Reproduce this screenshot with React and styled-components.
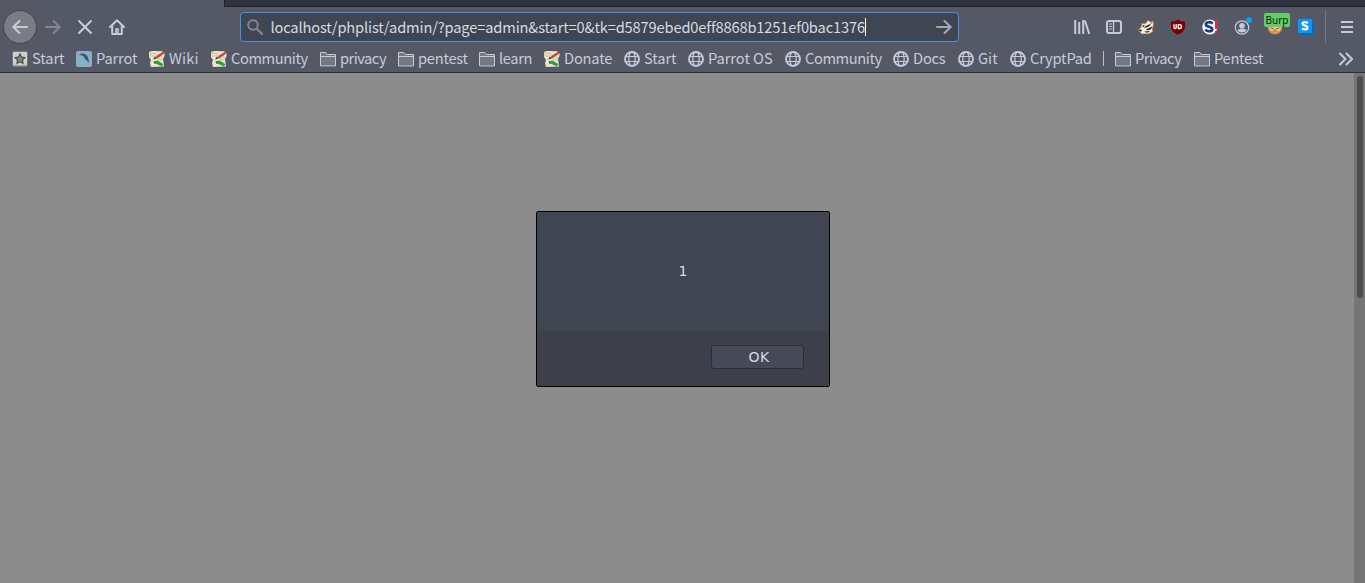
import React from "react";
import styled, { createGlobalStyle } from "styled-components";

const Global = createGlobalStyle`
  * { box-sizing: border-box; }
  html, body { margin: 0; height: 100%; overflow: hidden; }
  body { font-family: "Noto Sans CJK SC", "Noto Sans", sans-serif; background: #8c8c8c; }
  svg { display: block; flex: none; }
`;

const Window = styled.div`
  width: 1365px;
  height: 583px;
  display: flex;
  flex-direction: column;
  color: #c5cbdb;
`;
const TabStrip = styled.div`
  height: 7px;
  padding-left: 224px;
  background: #555965;
  flex: none;
`;
const InactiveTabs = styled.div`
  height: 7px;
  background: #2f333f;
  border-left: 1px solid #20232c;
  border-bottom: 1px solid #20232c;
`;
const NavBar = styled.div`
  height: 40px;
  flex: none;
  display: flex;
  align-items: center;
  background: #555965;
  padding-left: 3px;
`;
const BackButton = styled.div`
  width: 34px;
  height: 34px;
  border-radius: 50%;
  background: #7b7d84;
  border: 1px solid #41444f;
  display: grid;
  place-items: center;
  flex: none;
`;
const NavIcon = styled.div`
  width: 32px;
  height: 32px;
  display: grid;
  place-items: center;
  flex: none;
  opacity: ${(p) => (p.$dim ? 0.4 : 1)};
`;
const UrlBox = styled.div`
  width: 719px;
  height: 30px;
  margin-left: 107px;
  border: 1px solid #4c8fe2;
  border-radius: 4px;
  background: #404552;
  display: flex;
  align-items: center;
  padding: 0 6px;
  flex: none;
`;
const UrlText = styled.span`
  margin-left: 7.4px;
  font-size: 14.67px;
  line-height: 20px;
  letter-spacing: -0.15px;
  color: #d3dae3;
  white-space: nowrap;
`;
const Caret = styled.span`
  width: 1px;
  height: 18px;
  background: #fff;
`;
const GoIcon = styled.div`
  margin-left: auto;
`;
const Tools = styled.div`
  margin-left: 107px;
  display: flex;
  align-items: center;
  flex: none;
`;
const Tool = styled.div`
  width: 32px;
  height: 32px;
  display: grid;
  place-items: center;
  position: relative;
`;
const Badge = styled.span`
  position: absolute;
  left: 6px;
  top: 2px;
  width: 26px;
  height: 14px;
  border-radius: 2px;
  background: #62cc66;
  color: #10230f;
  font-family: "Noto Sans", sans-serif;
  font-size: 10px;
  line-height: 14px;
  text-align: center;
`;
const ToolDivider = styled.div`
  width: 1px;
  height: 34px;
  margin: 0 5px 0 3px;
  background: #757984;
`;
const Bookmarks = styled.div`
  height: 26px;
  flex: none;
  display: flex;
  align-items: center;
  padding: 0 11px 2px 12px;
  background: #555965;
  border-bottom: 1px solid #2b2e39;
`;
const Bookmark = styled.div`
  width: ${(p) => p.$w}px;
  flex: none;
  display: flex;
  align-items: center;
  gap: 4px;
  font-size: 14.67px;
  letter-spacing: ${(p) => p.$track}px;
  white-space: nowrap;
`;
const Label = styled.span`
  line-height: 20px;
  padding-bottom: 2px;
`;
const Separator = styled.div`
  width: 1px;
  height: 15px;
  margin-right: 11px;
  background: #b9bfcd;
`;
const Overflow = styled.div`
  margin-left: auto;
`;
const Page = styled.div`
  flex: 1;
  display: flex;
  background: #8c8c8c;
`;
const Content = styled.div`
  flex: 1;
  display: flex;
  justify-content: center;
  align-items: flex-start;
  padding: 138px 0 0 11px;
`;
const Scrollbar = styled.div`
  width: 11px;
  background: #757575;
  padding: 3px 2px 0 3px;
`;
const Thumb = styled.div`
  height: 222px;
  border-radius: 3px;
  background: #4c4d4f;
`;
const Dialog = styled.div`
  width: 294px;
  height: 176px;
  border: 1px solid #000;
  border-radius: 2px;
  overflow: hidden;
  font-family: "DejaVu Sans", sans-serif;
  font-size: 14px;
  color: #d3dae3;
`;
const Message = styled.div`
  height: 119px;
  background: #404552;
  display: grid;
  place-items: center;
  padding: 0 0 2px 1px;
`;
const Actions = styled.div`
  height: 55px;
  background: #3d404b;
  border-top: 1px solid #3c404c;
  display: flex;
  justify-content: flex-end;
  padding: 13px 25px 0 0;
`;
const OkButton = styled.button`
  width: 93px;
  height: 24px;
  padding: 0 0 0 4px;
  border: 1px solid #2b2e39;
  border-radius: 3px;
  background: #444a58;
  color: inherit;
  font: inherit;
  letter-spacing: 0.3px;
`;

const Svg = ({ size = 16, children, ...rest }) => (
  <svg width={size} height={size} viewBox="0 0 16 16" fill="none" stroke="#c5cbdb" strokeWidth="2" strokeLinecap="round" strokeLinejoin="round" {...rest}>
    {children}
  </svg>
);

const Arrow = ({ flip, color = "#c5cbdb" }) => (
  <Svg stroke={color}>
    <path d={flip ? "M15 8H1.5M7.5 2L1.3 8l6.2 6" : "M1 8h13.5M8.5 2l6.2 6-6.2 6"} />
  </Svg>
);
const Folder = () => (
  <Svg strokeWidth="1">
    <path d="M.5 14.5v-13h5.2l1.6 2h8.2v11z" fill="#747883" />
    <path d="M.5 5.5h15" />
  </Svg>
);
const Globe = () => (
  <Svg strokeWidth="1.2">
    <circle cx="8" cy="8" r="7" strokeWidth="1.9" />
    <ellipse cx="8" cy="8" rx="3.2" ry="7" />
    <path d="M1.5 5.5h13M1.5 10.5h13" />
  </Svg>
);
const StarMark = () => (
  <Svg stroke="none">
    <rect width="16" height="16" rx="2" fill="#777" />
    <rect x="1" y="1" width="14" height="13.5" rx="1" fill="#cfcfcc" />
    <path d="M8 1.6l1.9 4 4.3.6-3.1 3 .7 4.3L8 11.5l-3.8 2 .7-4.3-3.1-3 4.3-.6z" fill="#505050" />
    <path d="M8 4.5l1 2.3 2.5.3-1.8 1.8.4 2.4L8 10.1l-2.1 1.2.4-2.4-1.8-1.8L7 6.8z" fill="#858585" />
  </Svg>
);
const ParrotMark = () => (
  <Svg stroke="none">
    <rect width="16" height="16" rx="2" fill="#87afc5" />
    <path d="M3 3.6C5 2 8 2.2 9.8 3.4c2.5 1.8 3 4.6 3 8.6-1.3-1.2-1.6-2.4-2.6-3.4L9.4 9.3 8.4 6.2C7 4.7 5 4.4 3 3.6z" fill="#3f5668" />
  </Svg>
);
const WikiMark = () => (
  <Svg stroke="none">
    <path d="M0 1l3-1 10 .3L15.5 2v3L14 8l1 7.5-13 .5L1 12l1-3-2-3z" fill="#ebe7d6" />
    <path d="M2 2l5 1M2 5l4 0M9 8l4 1M12 6l2 1" stroke="#b3bf9d" strokeWidth="1" />
    <path d="M1 1v4M2 13v2" stroke="#dfc06a" strokeWidth="1" />
    <path d="M5.5 7l2.8-2.8L14.4.5l1.3 1.8-7 5z" fill="#cf4927" />
    <path d="M4 8.5l1.7-2.8 2.1 1.8z" fill="#632f22" />
    <path d="M4.5 10.2l4.2-.7 5.8 3.8-1.7 2L8 13.2z" fill="#25a52f" />
    <path d="M4.5 10.2l3 2.3-2 .2z" fill="#174f20" />
  </Svg>
);
const Library = () => (
  <Svg strokeLinecap="butt">
    <path d="M1.2 1v14M5.2 3v12M9.2 1v14" />
    <path d="M10.8 1.5L15.3 15" />
  </Svg>
);
const Sidebar = () => (
  <Svg>
    <rect x="1" y="2" width="14" height="12" rx="2" />
    <path d="M7.5 2v12" strokeWidth="1.3" />
    <path d="M3.5 5h2M3.5 7.5h2M3.5 10h2" strokeWidth="1" />
  </Svg>
);
const Badger = () => (
  <Svg stroke="none">
    <path d="M0 11.5L2.5 8 3.5 4l3 .5L10 1l2.5 1.5 3-.5.3 4-1 3 .2 4-4 2H4z" fill="#d98b4a" />
    <path d="M.8 11.5L4 7.8 4.5 5l3 .3L10.5 2l2 1.6 2.2-.4.2 3-1.2 3 .4 3.2-3.6 1.8-7 .2z" fill="#f4f0e8" />
    <path d="M4.6 6.2l2.4.2L5 8.6zM7.5 7.2l4-2 1.5.6-3 2-4 1.4zM8 10l2.5-.6L14 7.4l-.2 1.4-1.5 2-3 .4zM.8 11.3l2-1 1.2 1.4-1.4 1z" fill="#24201f" />
    <path d="M6 12.8l4-.7 2 .4-3 1.2zM12 3.8l1.6-.2-.3 1.4z" fill="#34302e" />
  </Svg>
);
const Shield = () => (
  <Svg stroke="none">
    <path d="M8 .5c2 1.5 4 2 7 2v5c0 4-3 6.5-7 8.3-4-1.8-7-4.3-7-8.3v-5c3 0 5-.5 7-2z" fill="#800000" />
    <path d="M4 5.7v2.7a1 1 0 002.2 0V5.7M8.2 5.7h1.4a1.9 1.9 0 010 3.8H8.2z" stroke="#fff" strokeWidth="1.3" />
  </Svg>
);
const ScriptBlock = () => (
  <Svg stroke="none">
    <circle cx="7.8" cy="8" r="7.5" fill="#f6f8fd" />
    <path d="M10.5 4.6C9 2.6 3.9 2.7 3.9 5.4c0 3 6.3 1.6 6.3 4.8 0 2.8-4.9 2.6-6.9.4" stroke="#143b8c" strokeWidth="2.7" strokeLinecap="butt" />
    <path d="M14.3 2v8M14.3 12v2.5" stroke="#ef2330" strokeWidth="2.6" strokeLinecap="butt" />
  </Svg>
);
const Account = () => (
  <svg width="20" height="20" viewBox="0 0 20 20" fill="none">
    <circle cx="10" cy="10.5" r="6.7" stroke="#c5cbdb" strokeWidth="1.2" />
    <circle cx="10" cy="8.7" r="2.8" fill="#c5cbdb" />
    <path d="M5.5 13.2c1-2 8-2 9 0-1.7 3-7.3 3-9 0z" fill="#c5cbdb" />
    <circle cx="17" cy="3.2" r="3" fill="#00a7ea" />
  </svg>
);
const Fox = () => (
  <Svg stroke="none">
    <circle cx="9" cy="8" r="7.5" fill="#d58a45" />
    <path d="M3 8h12c0 3-2.5 5.5-6 5.5S3 11 3 8z" fill="#f0c497" />
    <path d="M5 9l3 1M13 9l-3 1M7 12h4" stroke="#985b31" strokeWidth="1" />
  </Svg>
);
const SBlock = () => (
  <Svg stroke="none">
    <path d="M0 0h13l3 3v13H3l-3-3z" fill="#0569bd" />
    <rect width="14" height="14" fill="#0996f8" />
    <path d="M9.9 4.1C8.7 2.9 4.5 2.8 4.5 4.8c0 2.3 5 1.4 5 3.9 0 2.2-4 2.1-5.4.7" stroke="#fff" strokeWidth="2.2" strokeLinecap="butt" />
  </Svg>
);

const marks = { star: StarMark, parrot: ParrotMark, wiki: WikiMark, folder: Folder, globe: Globe };
const bookmarks = [
  ["star", "Start", 64, -0.1], ["parrot", "Parrot", 73, -0.15], ["wiki", "Wiki", 62, 0.2], ["wiki", "Community", 109, -0.4],
  ["folder", "privacy", 78, -0.5], ["folder", "pentest", 81, -0.25], ["folder", "learn", 65, -0.35], ["wiki", "Donate", 80, -0.2],
  ["globe", "Start", 64, -0.1], ["globe", "Parrot OS", 97, -0.05], ["globe", "Community", 108, -0.4], ["globe", "Docs", 65, -0.2],
  ["globe", "Git", 52, 0], ["globe", "CryptPad", 93, -0.2],
];
const pinned = [["folder", "Privacy", 79, -0.5], ["folder", "Pentest", 72, -0.3]];

const renderMark = ([kind, label, width, track], i) => {
  const Mark = marks[kind];
  return (
    <Bookmark key={label + i} $w={width} $track={track}>
      <Mark />
      <Label>{label}</Label>
    </Bookmark>
  );
};

export default function App() {
  return (
    <Window>
      <Global />
      <TabStrip><InactiveTabs /></TabStrip>
      <NavBar>
        <BackButton><Arrow flip /></BackButton>
        <NavIcon $dim><Arrow /></NavIcon>
        <NavIcon><Svg><path d="M2 2l12 12M14 2L2 14" /></Svg></NavIcon>
        <NavIcon>
          <Svg><path d="M1 8l7-6.7L15 8M3.2 7v8h9.6V7" /><path d="M7 14.5V10h2v4.5" strokeWidth="1.6" /></Svg>
        </NavIcon>
        <UrlBox>
          <Svg stroke="#7f8490"><circle cx="6" cy="6" r="4.8" /><path d="M9.8 9.8L15 15" strokeWidth="2.3" /></Svg>
          <UrlText>localhost/phplist/admin/?page=admin&amp;start=0&amp;tk=d5879ebed0eff8868b1251ef0bac1376</UrlText>
          <Caret />
          <GoIcon><Arrow color="#a4a8b2" /></GoIcon>
        </UrlBox>
        <Tools>
          <Tool><Library /></Tool>
          <Tool><Sidebar /></Tool>
          <Tool><Badger /></Tool>
          <Tool><Shield /></Tool>
          <Tool><ScriptBlock /></Tool>
          <Tool><Account /></Tool>
          <Tool><Fox /><Badge>Burp</Badge></Tool>
          <Tool><SBlock /></Tool>
          <ToolDivider />
          <Tool><Svg strokeLinecap="butt"><path d="M2 3h12M2 8h12M2 13h12" /></Svg></Tool>
        </Tools>
      </NavBar>
      <Bookmarks>
        {bookmarks.map(renderMark)}
        <Separator />
        {pinned.map(renderMark)}
        <Overflow><Svg><path d="M2 2.5L7.5 8 2 13.5M8.5 2.5L14 8l-5.5 5.5" /></Svg></Overflow>
      </Bookmarks>
      <Page>
        <Content>
          <Dialog>
            <Message>1</Message>
            <Actions><OkButton>OK</OkButton></Actions>
          </Dialog>
        </Content>
        <Scrollbar><Thumb /></Scrollbar>
      </Page>
    </Window>
  );
}
